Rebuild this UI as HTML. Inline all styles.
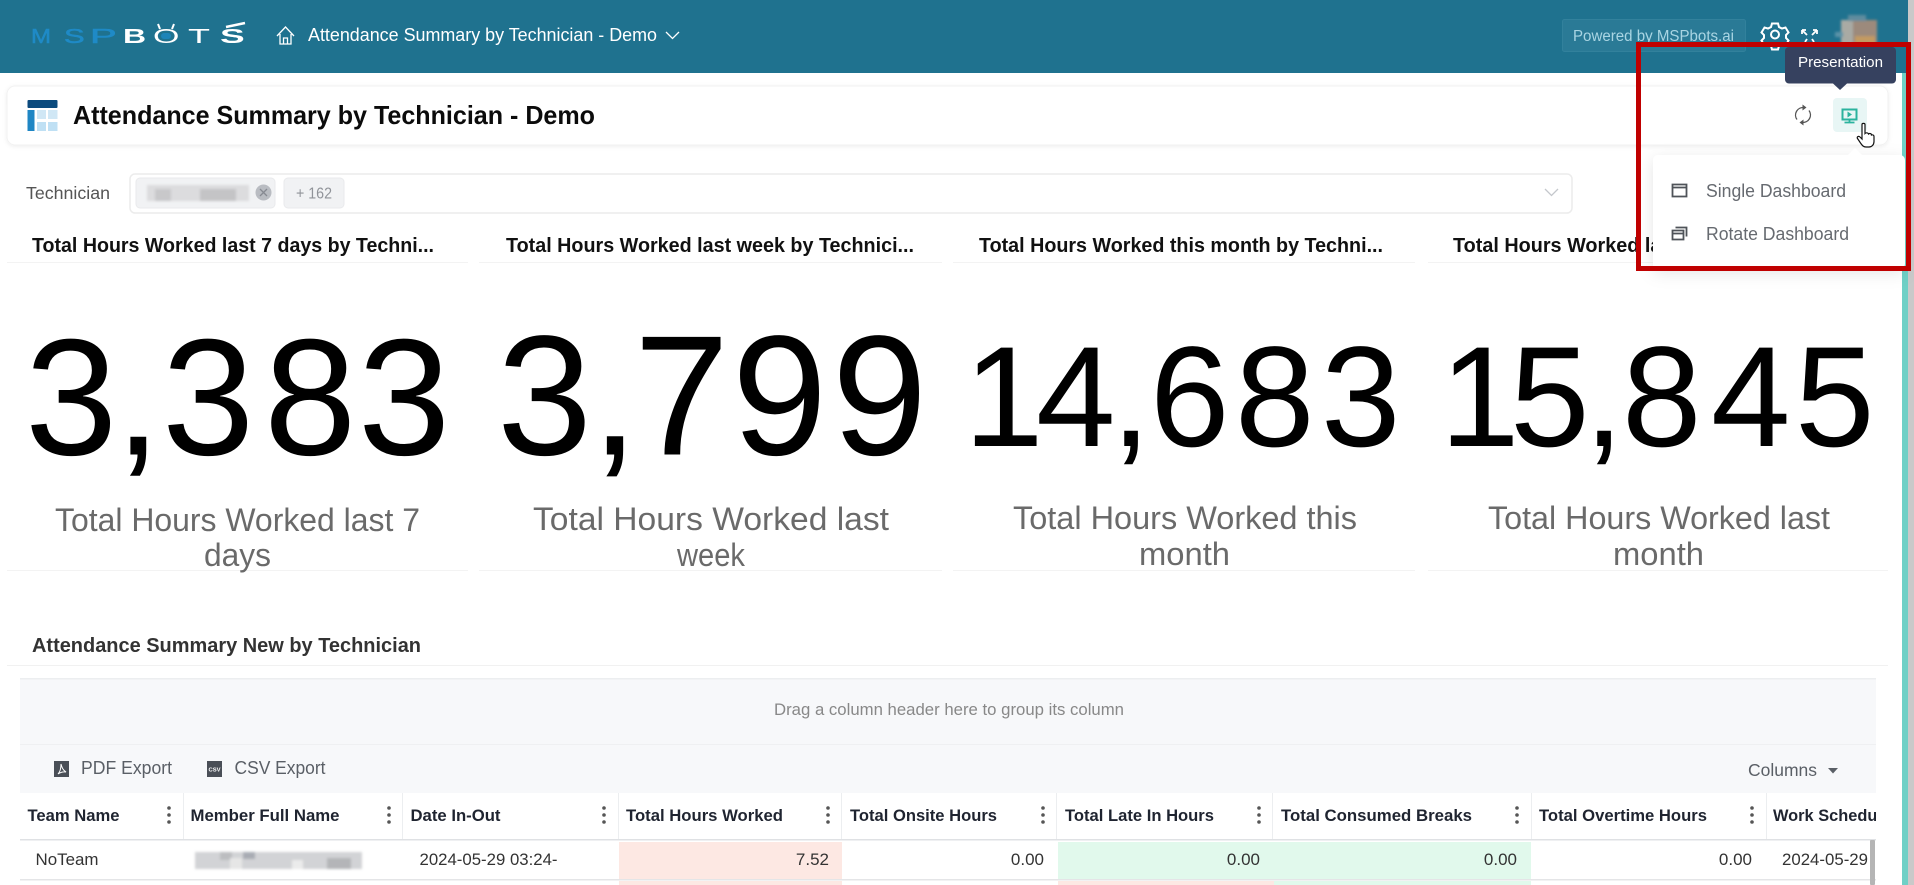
<!DOCTYPE html>
<html lang="en">
<head>
<meta charset="utf-8">
<title>Attendance Summary by Technician - Demo</title>
<style>
html,body{margin:0;padding:0;width:1914px;height:885px;overflow:hidden;background:#fff}
svg{display:block}
text{font-family:"Liberation Sans",Arial,sans-serif;white-space:pre}
.h{font-weight:700;font-size:17px;fill:#1f2430}
.b{font-size:17px;fill:#333}
.t{font-weight:700;font-size:20px;fill:#111}
.n1{font-size:166px;fill:#000}
.n{font-size:171px;fill:#000}
.n2{font-size:143px;fill:#000}
.l{font-size:32px;fill:#6a6a6a}
</style>
</head>
<body>
<svg width="1914" height="885" viewBox="0 0 1914 885" xmlns="http://www.w3.org/2000/svg">
<defs>
<filter id="bl" x="-10%" y="-30%" width="120%" height="160%"><feGaussianBlur stdDeviation="1.2"/></filter>
<filter id="sh" x="-20%" y="-20%" width="140%" height="150%"><feDropShadow dx="0" dy="4" stdDeviation="8" flood-color="#000" flood-opacity=".1"/></filter>
<filter id="cs" x="-2%" y="-20%" width="104%" height="150%"><feDropShadow dx="0" dy="1" stdDeviation="2" flood-color="#000" flood-opacity=".07"/></filter>
</defs>

<rect width="1914" height="885" fill="#fff"/>
<!-- right edge strips -->
<rect x="1902" y="73" width="6" height="812" fill="#6fd0c6"/>
<rect x="1908" y="0" width="6" height="885" fill="#c9c9c9"/>

<!-- top bar -->
<rect width="1908" height="73" fill="#1f728f"/>
<!-- logo -->
<g font-size="20">
<text transform="translate(31 43) scale(1.2 1)" fill="#1f8ac6" stroke="#1f8ac6" stroke-width=".5">M</text>
<text transform="translate(64 43) scale(1.55 1)" fill="#1f8ac6" stroke="#1f8ac6" stroke-width=".5">S</text>
<text transform="translate(90 43) scale(2 1)" fill="#1f8ac6" stroke="#1f8ac6" stroke-width=".5">P</text>
<text transform="translate(123 43) scale(1.6 1)" fill="#fff" font-weight="700">B</text>
<text transform="translate(153 43) scale(1.7 1)" fill="#fff">O</text>
<text transform="translate(188 43) scale(1.8 1)" fill="#fff">T</text>
<text transform="translate(220 43) scale(1.85 1)" fill="#fff" font-weight="700">S</text>
</g>
<path d="M160 29l-2-5M172 29l2-5" stroke="#fff" stroke-width="2"/>
<rect x="161" y="33" width="10" height="6" rx="3" fill="#1d84b8"/>
<path d="M226 27l19-4" stroke="#fff" stroke-width="2.500"/>
<!-- crumb -->
<path d="M277 36l8.500-9 8.500 9M280 34v10h11V34M283.500 44v-6h4v6" fill="none" stroke="#fff" stroke-width="1.300"/>
<text x="308" y="41" font-size="18" fill="#fff" textLength="349" lengthAdjust="spacingAndGlyphs">Attendance Summary by Technician - Demo</text>
<path d="M666 32l6.500 6.500 6.500-6.500" fill="none" stroke="#fff" stroke-width="1.300"/>
<!-- powered -->
<rect x="1562.500" y="19.500" width="183" height="32" rx="2" fill="#2a7a96" stroke="#32819c"/>
<text x="1573" y="41" font-size="15.500" fill="#a9d5e3" textLength="161" lengthAdjust="spacingAndGlyphs">Powered by MSPbots.ai</text>
<!-- gear -->
<g fill="none" stroke="#fff" stroke-width="2" transform="translate(1775 34.500)">
<circle r="4"/>
<path d="M-3-11h6l1 3.500 3 1.500 3.500-1 3 5-2.500 2.500v3l2.500 2.500-3 5-3.500-1-3 1.500-1 3.500h-6l-1-3.500-3-1.500-3.500 1-3-5 2.500-2.500v-3l-2.500-2.500 3-5 3.500 1 3-1.500z"/>
</g>
<!-- expand -->
<path d="M1802 30l5 5M1817 30l-5 5M1802 30v4M1802 30h4M1817 30v4M1817 30h-4M1805 42l2-3M1814 42l-2-3" fill="none" stroke="#fff" stroke-width="1.800"/>
<!-- avatar -->
<g filter="url(#bl)">
<rect x="1841" y="20" width="19" height="24" fill="#a9aaa4"/>
<rect x="1853" y="20" width="24" height="24" fill="#9c8a7c"/>
<rect x="1848" y="15" width="18" height="6" fill="#5f8c9f"/>
<rect x="1835" y="32" width="8" height="5" fill="#5b93a8"/>
<rect x="1855" y="36" width="20" height="8" fill="#c29a62"/>
</g>

<!-- title card -->
<rect x="7" y="86" width="1881" height="59" rx="8" fill="#fff" stroke="#f2f2f2" filter="url(#cs)"/>
<rect x="27.500" y="100" width="30" height="8" rx="1" fill="#0b4a7d"/>
<rect x="27.500" y="110" width="7" height="21" fill="#1f86c4"/>
<rect x="37" y="110" width="9" height="9" fill="#d0e7f5"/><rect x="48" y="110" width="9.500" height="9" fill="#d0e7f5"/>
<rect x="37" y="122" width="9" height="9" fill="#bfe0f4"/><rect x="48" y="122" width="9.500" height="9" fill="#bfe0f4"/>
<text x="73" y="124" font-size="26" font-weight="700" fill="#0b0b0b" textLength="522" lengthAdjust="spacingAndGlyphs">Attendance Summary by Technician - Demo</text>
<!-- refresh icon -->
<g fill="none" stroke="#555" stroke-width="1.300">
<path d="M1804 107.600A7.500 7.500 0 0 0 1797 119.500M1802 122.400A7.500 7.500 0 0 0 1809 110.500"/>
<path d="M1802.500 104.500l4 3-4 3zM1803.500 125.500l-4-3 4-3z" fill="#555" stroke="none"/>
</g>

<!-- filter -->
<text x="26" y="199" font-size="17.500" fill="#555" textLength="84" lengthAdjust="spacingAndGlyphs">Technician</text>
<rect x="130" y="174" width="1442" height="39" rx="5" fill="#fff" stroke="#ececec" stroke-width="1.500"/>
<rect x="136" y="178" width="139" height="30" rx="4" fill="#f1f2f4" stroke="#e9eaec"/>
<g filter="url(#bl)">
<rect x="147" y="185" width="102" height="16" fill="#dcdcde"/>
<rect x="155" y="189" width="16" height="12" fill="#c8c8ca"/>
<rect x="200" y="189" width="36" height="12" fill="#c4c4c6"/>
</g>
<circle cx="263.500" cy="192.500" r="8" fill="#b9bcc2"/>
<path d="M260 189l7 7M267 189l-7 7" stroke="#868a92" stroke-width="1.300"/>
<rect x="284" y="178" width="60" height="30" rx="4" fill="#f1f2f4" stroke="#e9eaec"/>
<text x="296" y="198.500" font-size="15.500" fill="#909399" textLength="36" lengthAdjust="spacingAndGlyphs">+ 162</text>
<path d="M1545 189l6.500 6.500 6.500-6.500" fill="none" stroke="#c4c7cc" stroke-width="1.300"/>

<!-- widget titles -->
<text class="t" x="32" y="252" textLength="402" lengthAdjust="spacingAndGlyphs">Total Hours Worked last 7 days by Techni...</text>
<text class="t" x="506" y="252" textLength="408" lengthAdjust="spacingAndGlyphs">Total Hours Worked last week by Technici...</text>
<text class="t" x="979" y="252" textLength="404" lengthAdjust="spacingAndGlyphs">Total Hours Worked this month by Techni...</text>
<text class="t" x="1453" y="252" textLength="405" lengthAdjust="spacingAndGlyphs">Total Hours Worked last month by Techni...</text>
<g fill="#f3f3f3">
<rect x="7" y="262" width="461" height="1"/><rect x="479" y="262" width="463" height="1"/><rect x="953" y="262" width="462" height="1"/><rect x="1428" y="262" width="460" height="1"/>
<rect x="7" y="570" width="461" height="1"/><rect x="479" y="570" width="463" height="1"/><rect x="953" y="570" width="462" height="1"/><rect x="1428" y="570" width="460" height="1"/>
</g>

<!-- big numbers -->
<text class="n1" x="25 115 162 264 358" y="454.500">3,383</text>
<text class="n" x="497 591 634 732 832" y="454.500">3,799</text>
<text class="n2" x="964 1036 1111 1150 1235 1321" y="446">14,683</text>
<text class="n2" x="1440 1510 1584 1622 1711 1795" y="446">15,845</text>

<!-- labels -->
<text class="l" x="55" y="531" textLength="365" lengthAdjust="spacingAndGlyphs">Total Hours Worked last 7</text>
<text class="l" x="204" y="566" textLength="67" lengthAdjust="spacingAndGlyphs">days</text>
<text class="l" x="533" y="530" textLength="356" lengthAdjust="spacingAndGlyphs">Total Hours Worked last</text>
<text class="l" x="677" y="566" textLength="68" lengthAdjust="spacingAndGlyphs">week</text>
<text class="l" x="1013" y="529" textLength="344" lengthAdjust="spacingAndGlyphs">Total Hours Worked this</text>
<text class="l" x="1139" y="565" textLength="91" lengthAdjust="spacingAndGlyphs">month</text>
<text class="l" x="1488" y="529" textLength="342" lengthAdjust="spacingAndGlyphs">Total Hours Worked last</text>
<text class="l" x="1613" y="565" textLength="91" lengthAdjust="spacingAndGlyphs">month</text>

<!-- table section -->
<text x="32" y="652" font-size="20" font-weight="700" fill="#333" textLength="389" lengthAdjust="spacingAndGlyphs">Attendance Summary New by Technician</text>
<rect x="7" y="665" width="1881" height="1" fill="#f1f1f1"/>
<rect x="20" y="678" width="1856" height="115" fill="#f7f8fa"/>
<rect x="20" y="678" width="1856" height="1.500" fill="#eceef0"/>
<rect x="20" y="744" width="1856" height="1" fill="#eff0f2"/>
<text x="774" y="715" font-size="17" fill="#888" textLength="350" lengthAdjust="spacingAndGlyphs">Drag a column header here to group its column</text>

<!-- toolbar -->
<rect x="54" y="761" width="15" height="16" fill="#4a4f57"/>
<path d="M58 774c2-2 3-6 3-10 1 4 2 6 5 8-3-.500-5 0-8 2z" fill="none" stroke="#fff" stroke-width="1"/>
<text x="81" y="774" font-size="18" fill="#5a5f66" textLength="91" lengthAdjust="spacingAndGlyphs">PDF Export</text>
<rect x="207" y="761" width="15" height="16" fill="#4a4f57"/>
<text x="208.500" y="771.500" font-size="5.500" font-weight="700" fill="#fff" textLength="12" lengthAdjust="spacingAndGlyphs">CSV</text>
<text x="234.500" y="774" font-size="18" fill="#5a5f66" textLength="91" lengthAdjust="spacingAndGlyphs">CSV Export</text>
<text x="1748" y="776" font-size="17.500" fill="#5a5f66" textLength="69" lengthAdjust="spacingAndGlyphs">Columns</text>
<path d="M1828 768h10l-5 5.500z" fill="#5a5f66"/>

<!-- header row -->
<rect x="20" y="793" width="1856" height="46" fill="#fff"/>
<rect x="20" y="839" width="1856" height="1.500" fill="#dfe1e4"/>
<g fill="#eceef0">
<rect x="183" y="793" width="1" height="46"/><rect x="402" y="793" width="1" height="46"/><rect x="618" y="793" width="1" height="46"/><rect x="841" y="793" width="1" height="46"/><rect x="1056" y="793" width="1" height="46"/><rect x="1272" y="793" width="1" height="46"/><rect x="1531" y="793" width="1" height="46"/><rect x="1766" y="793" width="1" height="46"/>
</g>
<text class="h" x="27.500" y="821" textLength="92" lengthAdjust="spacingAndGlyphs">Team Name</text>
<text class="h" x="190.500" y="821" textLength="149" lengthAdjust="spacingAndGlyphs">Member Full Name</text>
<text class="h" x="410.500" y="821" textLength="90" lengthAdjust="spacingAndGlyphs">Date In-Out</text>
<text class="h" x="626" y="821" textLength="157" lengthAdjust="spacingAndGlyphs">Total Hours Worked</text>
<text class="h" x="850" y="821" textLength="147" lengthAdjust="spacingAndGlyphs">Total Onsite Hours</text>
<text class="h" x="1065" y="821" textLength="149" lengthAdjust="spacingAndGlyphs">Total Late In Hours</text>
<text class="h" x="1281" y="821" textLength="191" lengthAdjust="spacingAndGlyphs">Total Consumed Breaks</text>
<text class="h" x="1539" y="821" textLength="168" lengthAdjust="spacingAndGlyphs">Total Overtime Hours</text>
<svg x="1773" y="793" width="103" height="46"><text class="h" x="0" y="28" textLength="118" lengthAdjust="spacingAndGlyphs">Work Schedule</text></svg>
<g fill="#555">
<circle cx="169" cy="808" r="1.800"/><circle cx="169" cy="815" r="1.800"/><circle cx="169" cy="822" r="1.800"/>
<circle cx="389" cy="808" r="1.800"/><circle cx="389" cy="815" r="1.800"/><circle cx="389" cy="822" r="1.800"/>
<circle cx="604" cy="808" r="1.800"/><circle cx="604" cy="815" r="1.800"/><circle cx="604" cy="822" r="1.800"/>
<circle cx="828" cy="808" r="1.800"/><circle cx="828" cy="815" r="1.800"/><circle cx="828" cy="822" r="1.800"/>
<circle cx="1043" cy="808" r="1.800"/><circle cx="1043" cy="815" r="1.800"/><circle cx="1043" cy="822" r="1.800"/>
<circle cx="1259" cy="808" r="1.800"/><circle cx="1259" cy="815" r="1.800"/><circle cx="1259" cy="822" r="1.800"/>
<circle cx="1517" cy="808" r="1.800"/><circle cx="1517" cy="815" r="1.800"/><circle cx="1517" cy="822" r="1.800"/>
<circle cx="1752" cy="808" r="1.800"/><circle cx="1752" cy="815" r="1.800"/><circle cx="1752" cy="822" r="1.800"/>
</g>

<!-- rows -->
<rect x="619" y="842" width="223" height="37" fill="#fde8e3"/>
<rect x="1058" y="842" width="473" height="37" fill="#e1f9ec"/>
<rect x="20" y="879" width="1856" height="1.500" fill="#e4e5e7"/>
<rect x="619" y="881" width="223" height="4" fill="#fde8e3"/>
<rect x="1058" y="881" width="216" height="4" fill="#fde8e3"/>
<rect x="1274" y="881" width="257" height="4" fill="#e1f9ec"/>
<text class="b" x="35.500" y="865" textLength="63" lengthAdjust="spacingAndGlyphs">NoTeam</text>
<g filter="url(#bl)">
<rect x="195" y="852" width="167" height="17" fill="#d2d3d6"/>
<rect x="243" y="852" width="12" height="7" fill="#a8acb4"/>
<rect x="220" y="852" width="12" height="8" fill="#bcbdc0"/>
<rect x="327" y="858" width="24" height="11" fill="#b4b5b8"/>
<rect x="230" y="858" width="12" height="11" fill="#e6e6e6"/>
<rect x="292" y="860" width="11" height="9" fill="#ebebeb"/>
</g>
<text class="b" x="419.500" y="865" textLength="138" lengthAdjust="spacingAndGlyphs">2024-05-29 03:24-</text>
<g text-anchor="end">
<text class="b" x="829" y="865">7.52</text>
<text class="b" x="1044" y="865">0.00</text>
<text class="b" x="1260" y="865">0.00</text>
<text class="b" x="1517" y="865">0.00</text>
<text class="b" x="1752" y="865">0.00</text>
</g>
<svg x="1782" y="840" width="88" height="45"><text class="b" x="0" y="25" textLength="86" lengthAdjust="spacingAndGlyphs">2024-05-29</text></svg>
<rect x="1870" y="840" width="5" height="45" rx="1" fill="#b5b5b5"/>

<!-- popover -->
<rect x="1653" y="155" width="252" height="114" rx="5" fill="#fff" filter="url(#sh)"/>
<path d="M1848 155l7-7 7 7z" fill="#fff"/>
<path d="M1672.500 184.500h14v12h-14zM1672.500 187.500h14" fill="none" stroke="#4f5359" stroke-width="1.800"/>
<text x="1706" y="197" font-size="18" fill="#666a70" textLength="140" lengthAdjust="spacingAndGlyphs">Single Dashboard</text>
<path d="M1672.500 230.500h11v9h-11zM1672.500 233.500h11M1675.500 227.500h11v9" fill="none" stroke="#4f5359" stroke-width="1.800"/>
<text x="1706" y="240" font-size="18" fill="#666a70" textLength="143" lengthAdjust="spacingAndGlyphs">Rotate Dashboard</text>

<!-- presentation button -->
<rect x="1833" y="98" width="34" height="34" rx="4" fill="#e8f6f5"/>
<path d="M1842.500 109.500h14v10h-14z" fill="none" stroke="#2bb39e" stroke-width="2"/>
<path d="M1847.500 111.500l4.500 3-4.500 3z" fill="#2bb39e"/>
<path d="M1849.500 120v2.500M1844.500 122.500h10" stroke="#2bb39e" stroke-width="1.800"/>

<!-- hand cursor -->
<path d="M1862 124.500c0-1.500 3-1.500 3 0v9c1-1 3-1 3.500.5 1-1 3-.5 3 1 1-.5 2.500 0 2.500 1.500v5c0 3-2 5.500-5 5.500h-3c-3 0-4-2-5.500-4l-3-4.500c-1-1.500 1-3 2.500-1.500l2 2z" fill="#fff" stroke="#111" stroke-width="1.200"/>

<!-- annotation box -->
<rect x="1638.500" y="44.500" width="270" height="224" fill="none" stroke="#c00000" stroke-width="5"/>

<!-- tooltip -->
<rect x="1785" y="47" width="111" height="36.500" rx="4" fill="#36415f"/>
<path d="M1833 83.500h14l-7 6.500z" fill="#36415f"/>
<text x="1798" y="67" font-size="15" fill="#fff" textLength="85" lengthAdjust="spacingAndGlyphs">Presentation</text>
</svg>
</body>
</html>
